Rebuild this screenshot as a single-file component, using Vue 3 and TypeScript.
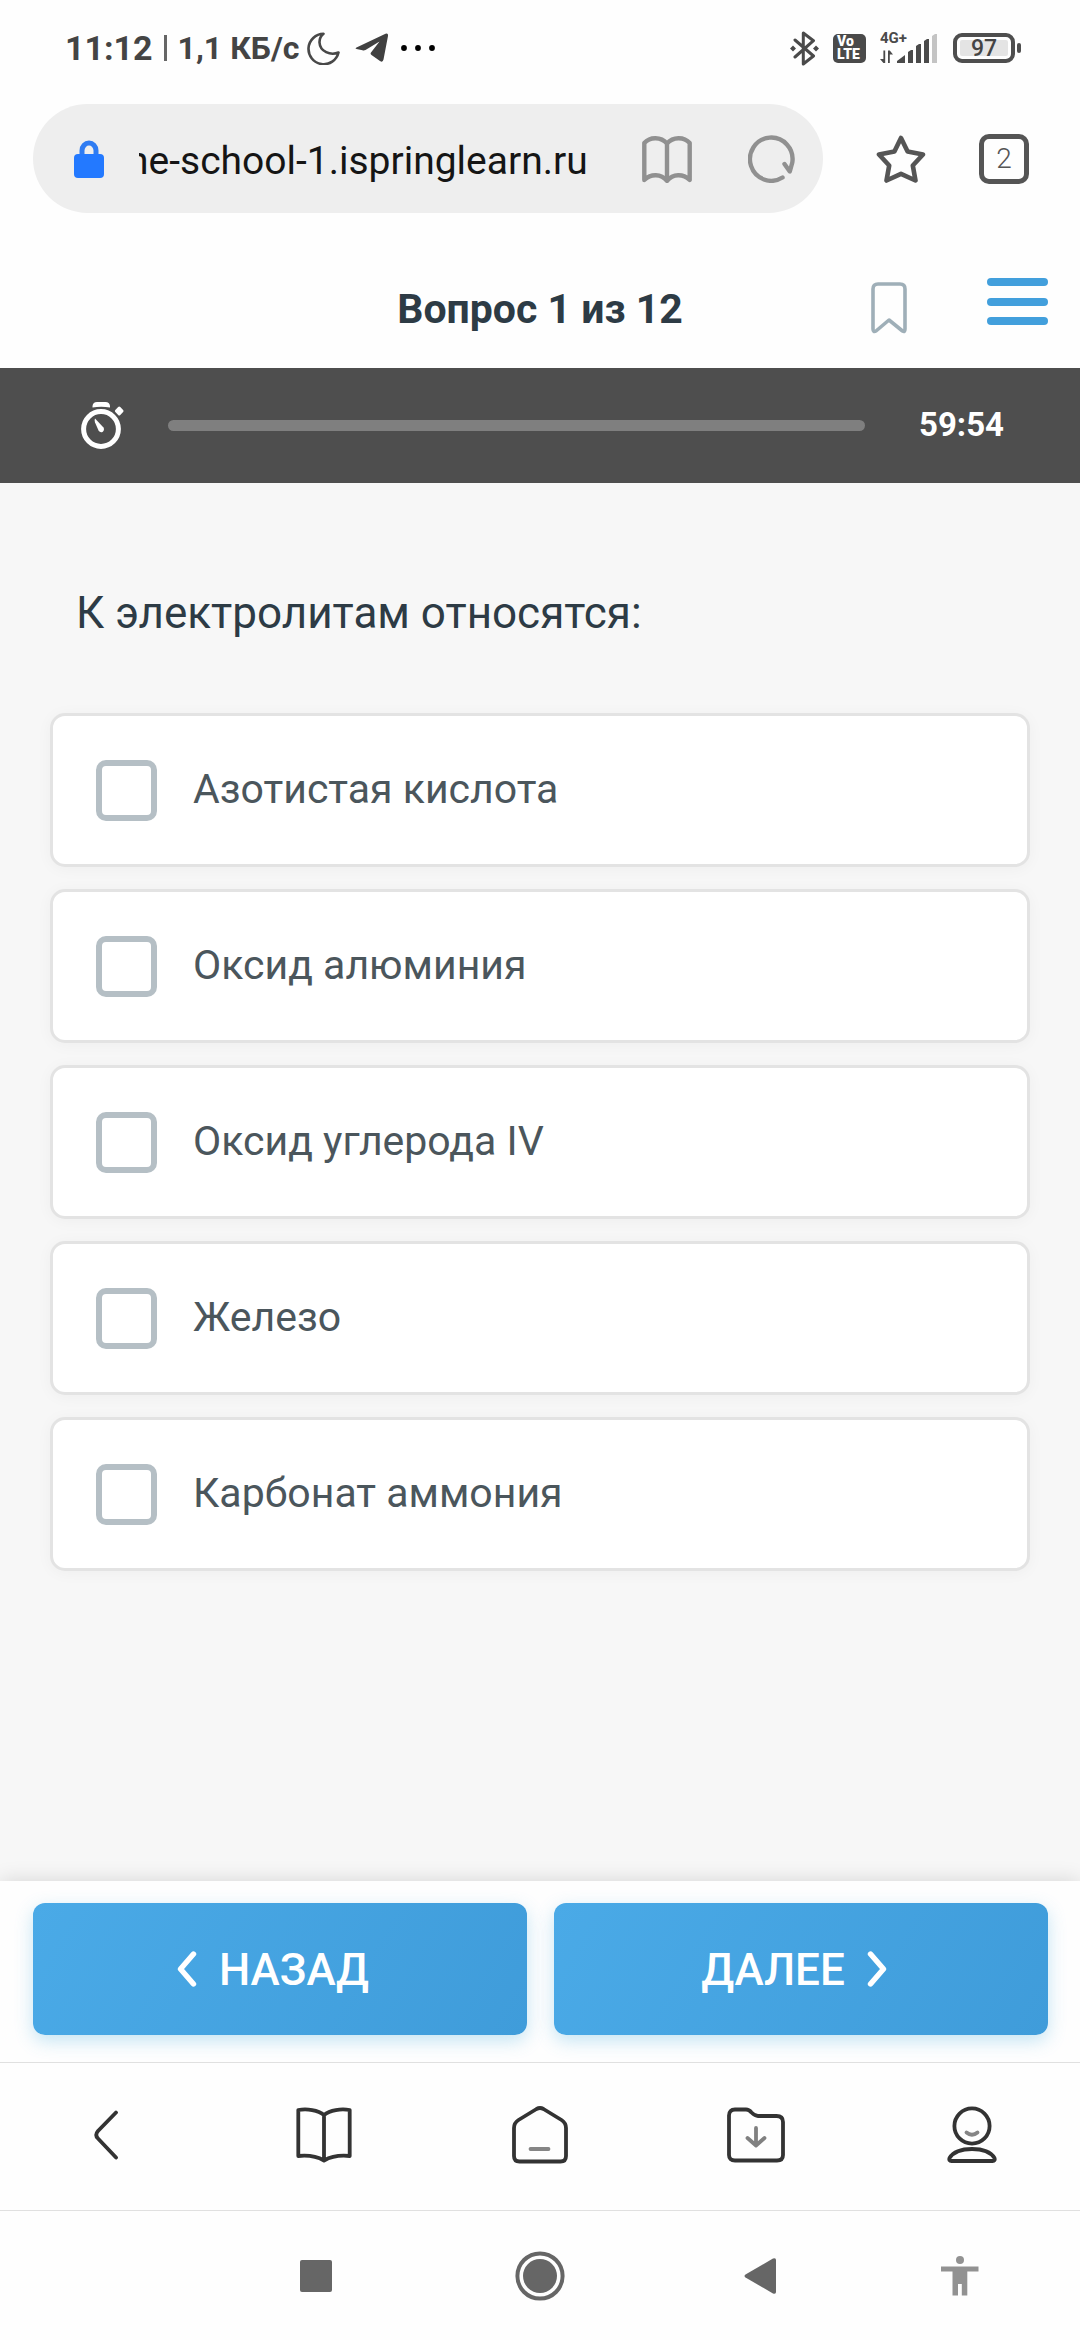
<script setup lang="ts">
import { onMounted, ref } from 'vue'

interface Answer {
  id: string
  label: string
}

const address = ref('ne-school-1.ispringlearn.ru')
const addressBox = ref<HTMLInputElement | null>(null)

const answers: Answer[] = [
  { id: 'a1', label: 'Азотистая кислота' },
  { id: 'a2', label: 'Оксид алюминия' },
  { id: 'a3', label: 'Оксид углерода IV' },
  { id: 'a4', label: 'Железо' },
  { id: 'a5', label: 'Карбонат аммония' },
]
const chosen = ref<string[]>([])

// Long addresses show their end, so the domain stays readable.
onMounted(() => {
  const box = addressBox.value
  if (box) box.scrollLeft = box.scrollWidth
})
</script>

<template>
  <div class="screen">
    <div class="status">
      <div class="status-left">
        <span class="clock">11:12</span>
        <span class="divider"></span>
        <span class="speed">1,1 КБ/с</span>
        <svg class="moon" width="33" height="33" viewBox="0 0 33 33" fill="none" stroke="#484848" stroke-width="2.6" stroke-linejoin="round">
          <path d="M16.5 1.8A15.2 15.2 0 1 0 31.5 20.5C23.5 24 13 19.5 12.5 10.5C12.4 7 13.8 4 16.5 1.8Z" />
        </svg>
        <svg class="plane" width="34" height="30" viewBox="0 0 34 30" fill="#404040">
          <path d="M1.5 14.5L30.5.7Q33.5-.3 33 3L28.5 26.5Q27.8 29.8 25 28L16.5 22Q15 20.8 16 19.5L24.5 8.5L10.5 17Q9 17.8 7.5 17.3L1.5 16Q-.5 15.4 1.5 14.5Z" />
        </svg>
        <svg width="34" height="6" viewBox="0 0 34 6" fill="#000">
          <circle cx="3" cy="3" r="2.9" /><circle cx="17" cy="3" r="2.9" /><circle cx="31" cy="3" r="2.9" />
        </svg>
      </div>
      <div class="status-right">
        <svg width="29" height="35" viewBox="0 0 29 35" fill="none" stroke="#4a4a4a" stroke-width="3" stroke-linejoin="round" stroke-linecap="round">
          <path d="M5 9L23.5 25L13.3 33V2L23.5 9.7L5 26" />
          <path d="M0 17.5L3 14.5L6 17.5L3 20.5ZM23 17.5L26 14.5L29 17.5L26 20.5Z" fill="#4a4a4a" stroke="none" />
        </svg>
        <span class="volte"><span>Vo</span><span>LTE</span></span>
        <svg class="signal" width="58" height="44" viewBox="0 -6 58 44" fill="#4a4a4a">
          <text x="0" y="11" class="net">4G+</text>
          <path d="M3.4 18.5H5.2V31H3.4L0 27H3.4ZM8 18.5H9.8L13 22.5H9.8V31H8Z" />
          <path d="M17 31V29L25 23V31ZM28 20L31 18H33V31H28ZM36 14L39 12H41V31H36ZM44 9L47 7H49V31H44Z" />
          <path d="M52 4L55 2H57V31H52Z" fill="#c4c4c4" />
        </svg>
        <span class="battery">97</span>
      </div>
    </div>

    <div class="browser">
      <div class="omnibox">
        <svg width="30" height="38" viewBox="0 0 30 38">
          <path d="M8 16V10.5A7 7.5 0 0 1 22 10.5V16" fill="none" stroke="#2f7cf2" stroke-width="5" />
          <rect y="14" width="30" height="24" rx="4" fill="#2379ff" />
        </svg>
        <input ref="addressBox" v-model="address" class="address" type="text" aria-label="Адрес" />
        <button type="button" class="icon" aria-label="Чтение">
          <svg width="50" height="48" viewBox="0 0 50 48" fill="none" stroke="#909090" stroke-width="4.4" stroke-linejoin="round">
            <path d="M25 8.5C19 1.5 8 1.5 2.3 8V45C9 38.5 19 38.5 25 46C31 38.5 41 38.5 47.7 45V8C42 1.5 31 1.5 25 8.5ZM25 8.5V45" />
          </svg>
        </button>
        <button type="button" class="icon" aria-label="Обновить">
          <svg width="48" height="48" viewBox="0 0 48 48" fill="none" stroke="#909090" stroke-width="4.4" stroke-linejoin="round" stroke-linecap="round">
            <path d="M34.5 42.5A21.3 21.6 0 1 1 44.3 27.5L41.8 36.5L36.5 29" />
          </svg>
        </button>
      </div>
      <button type="button" class="icon" aria-label="В закладки">
        <svg width="50" height="48" viewBox="0 0 50 48" fill="none" stroke="#555" stroke-width="4.6" stroke-linejoin="round">
          <path d="M25 3L31.6 16.6L47 19.5L36.8 30.5L39.5 45.5L25 38.8L10.5 45.5L13.2 30.5L3 19.5L18.4 16.6Z" />
        </svg>
      </button>
      <button type="button" class="tabs" aria-label="Вкладки">2</button>
    </div>

    <header class="head">
      <h1>Вопрос 1 из 12</h1>
      <div class="head-tools">
        <button type="button" class="icon" aria-label="Отметить вопрос">
          <svg width="36" height="52" viewBox="0 0 36 52" fill="none" stroke="#9fafb8" stroke-width="3.6" stroke-linejoin="round">
            <path d="M2 7Q2 2 7 2H29Q34 2 34 7V47Q34 50.5 31.5 49L18 38L5 49Q2 50.5 2 47Z" />
          </svg>
        </button>
        <button type="button" class="icon menu" aria-label="Меню">
          <svg width="61" height="48" viewBox="0 0 61 48" fill="#429fdc">
            <rect width="61" height="8" rx="4" /><rect y="20" width="61" height="8" rx="4" /><rect y="39" width="61" height="8" rx="4" />
          </svg>
        </button>
      </div>
    </header>

    <div class="timer">
      <svg width="44" height="47" viewBox="0 0 44 47" fill="#fff">
        <circle cx="20" cy="27" r="17.4" fill="none" stroke="#fff" stroke-width="5" />
        <path d="M11.5 5.5V4Q12 0 16 0H24.5Q28.5 0 29 4V5.5Q20 4 11.5 5.5Z" />
        <rect x="34.7" y="5.5" width="7" height="7" rx="1.5" transform="rotate(45 38.2 9)" />
        <path d="M14 16.5Q13.2 18 14 20.5L17.5 28.5Q19 31 21.5 30Q23.8 28 22.5 25.5Z" />
      </svg>
      <div class="track" role="progressbar" aria-label="Оставшееся время"></div>
      <span class="left">59:54</span>
    </div>

    <main class="body">
      <h2>К электролитам относятся:</h2>
      <ul class="answers">
        <li v-for="a in answers" :key="a.id">
          <label class="answer" :for="a.id">
            <input :id="a.id" v-model="chosen" type="checkbox" :value="a.id" />
            <span class="label">{{ a.label }}</span>
          </label>
        </li>
      </ul>
    </main>

    <div class="actions">
      <button type="button">
        <svg width="20" height="36" viewBox="0 0 20 36" fill="none" stroke="#fff" stroke-width="5.4" stroke-linecap="round" stroke-linejoin="round">
          <path d="M16.5 3L3.5 18L16.5 33" />
        </svg>
        <span class="caption">НАЗАД</span>
      </button>
      <button type="button">
        <span class="caption">ДАЛЕЕ</span>
        <svg width="20" height="36" viewBox="0 0 20 36" fill="none" stroke="#fff" stroke-width="5.4" stroke-linecap="round" stroke-linejoin="round">
          <path d="M3.5 3L16.5 18L3.5 33" />
        </svg>
      </button>
    </div>

    <nav class="toolbar">
      <button type="button" class="icon" aria-label="Назад">
        <svg width="28" height="50" viewBox="0 0 28 50" fill="none" stroke="#333" stroke-width="3.8" stroke-linecap="round">
          <path d="M22 2.5L4 21Q.5 25 4 28.5L22 47.5" />
        </svg>
      </button>
      <button type="button" class="icon" aria-label="Чтение">
        <svg width="56" height="56" viewBox="0 0 56 56" fill="none" stroke="#333" stroke-width="3.8" stroke-linejoin="round">
          <path d="M28 8C22 3 11 1.5 2.3 3V49C12 48 21 49.5 28 53.5C35 49.5 44 48 53.7 49V3C45 1.5 34 3 28 8ZM28 8V53" />
        </svg>
      </button>
      <button type="button" class="icon" aria-label="Домой">
        <svg width="56" height="58" viewBox="0 0 56 58" fill="none" stroke="#333" stroke-width="3.8" stroke-linecap="round" stroke-linejoin="round">
          <path d="M24.5 3L6.5 14Q2 17 2 22V50Q2 55.5 7.5 55.5H48.5Q54 55.5 54 50V22Q54 17 49.5 14L31.5 3Q28 1 24.5 3Z" />
          <path d="M18.5 43H36.5" stroke="#858585" />
        </svg>
      </button>
      <button type="button" class="icon" aria-label="Загрузки">
        <svg width="58" height="56" viewBox="0 0 58 56" fill="none" stroke="#333" stroke-width="3.8" stroke-linecap="round" stroke-linejoin="round">
          <path d="M8 2.5H19Q22 2.5 24.5 5.5Q28 9 31 9H49.5Q56 9 56 15V48Q56 53.5 50 53.5H8Q2 53.5 2 48V8.5Q2 2.5 8 2.5Z" />
          <path d="M29 21V38M20.5 31L29 38.5L37.5 31" stroke="#808080" />
        </svg>
      </button>
      <button type="button" class="icon" aria-label="Профиль">
        <svg width="50" height="57" viewBox="0 0 50 57" fill="none" stroke="#333" stroke-width="3.8" stroke-linecap="round" stroke-linejoin="round">
          <circle cx="25" cy="20" r="17.6" />
          <path d="M2.5 52C7 45 15 43 25 43C35 43 43 45 47.5 52Q48.5 55 45.5 55H4.5Q1.5 55 2.5 52Z" />
          <path d="M19.5 26.5Q25 31 30.5 26.5" stroke="#858585" />
        </svg>
      </button>
    </nav>

    <nav class="system">
      <button type="button" class="icon" aria-label="Недавние">
        <svg width="32" height="32" viewBox="0 0 32 32" fill="#666"><rect width="32" height="32" rx="2" /></svg>
      </button>
      <button type="button" class="icon" aria-label="Главный экран">
        <svg width="50" height="50" viewBox="0 0 50 50" fill="#666">
          <circle cx="25" cy="25" r="22.6" fill="none" stroke="#666" stroke-width="4" /><circle cx="25" cy="25" r="17" />
        </svg>
      </button>
      <button type="button" class="icon" aria-label="Назад">
        <svg width="40" height="36" viewBox="0 0 40 36" fill="#666">
          <path d="M1.5 16.5L29 .5Q32 -.5 32 2V34Q32 36.5 29 35.5L1.5 19.5Q-.5 18 1.5 16.5Z" />
        </svg>
      </button>
      <button type="button" class="icon" aria-label="Специальные возможности">
        <svg width="38" height="40" viewBox="0 0 38 40" fill="#929292">
          <circle cx="19" cy="4" r="4" />
          <path d="M0 10.5H37.5V15.5H26.3V39.5H20.8V28H17V39.5H11.5V15.5H0Z" />
        </svg>
      </button>
    </nav>
  </div>
</template>

<style>
body {
  margin: 0;
}
</style>

<style scoped>
.screen {
  display: flex;
  flex-direction: column;
  min-height: 100vh;
  background: #fefefe;
  font-family: Roboto, "Noto Sans", sans-serif;
}
button {
  border: 0;
  padding: 0;
  background: none;
  font-family: inherit;
}
svg {
  display: block;
  flex: none;
}
.icon {
  display: flex;
  align-items: center;
  justify-content: center;
}

.status {
  display: flex;
  justify-content: space-between;
  align-items: center;
  height: 96px;
  padding: 0 65px;
  color: #444;
}
.status-left,
.status-right {
  display: flex;
  align-items: center;
}
.clock {
  font-size: 34px;
  font-weight: 700;
}
.divider {
  width: 3px;
  height: 26px;
  margin: 0 11px;
  background: #666;
}
.speed {
  font-size: 32px;
  font-weight: 700;
}
.moon {
  margin-left: 8px;
}
.plane {
  margin: 0 12px 0 15px;
}
.volte {
  display: flex;
  flex-direction: column;
  justify-content: center;
  align-items: flex-start;
  box-sizing: border-box;
  width: 33px;
  height: 29px;
  margin: 0 14px;
  padding-left: 4px;
  border-radius: 5px;
  background: #4a4a4a;
  color: #fff;
  font-size: 14px;
  font-weight: 900;
  line-height: 13px;
}
.signal {
  margin-right: 15px;
}
.net {
  font-size: 15px;
  font-weight: 700;
}
.battery {
  position: relative;
  box-sizing: border-box;
  width: 62px;
  height: 30px;
  border: 4px solid #4e4e4e;
  border-radius: 9px;
  background: #e4e4e4;
  box-shadow: inset 0 0 0 3px #fefefe;
  color: #444;
  font-size: 23px;
  font-weight: 500;
  line-height: 24px;
  text-align: center;
}
.battery::after {
  content: "";
  position: absolute;
  top: 6px;
  right: -10px;
  width: 4px;
  height: 10px;
  border-radius: 2px;
  background: #4e4e4e;
}

.browser {
  display: flex;
  align-items: center;
  padding: 8px 51px 34px 33px;
}
.omnibox {
  display: flex;
  flex: 1;
  align-items: center;
  min-width: 0;
  height: 109px;
  margin-right: 53px;
  padding: 0 27px 0 41px;
  box-sizing: border-box;
  border-radius: 55px;
  background: #eee;
}
.address {
  flex: 1;
  min-width: 0;
  margin: 0 54px 0 35px;
  padding: 4px 0 0;
  border: 0;
  outline: 0;
  background: none;
  color: #151515;
  font-family: inherit;
  font-size: 39px;
  line-height: 48px;
}
.omnibox .icon + .icon {
  margin-left: 56px;
}
.tabs {
  width: 50px;
  height: 50px;
  margin-left: 53px;
  border: 5px solid #555;
  border-radius: 10px;
  color: #555;
  font-size: 28px;
  font-weight: 300;
  line-height: 40px;
}

.head {
  display: grid;
  grid-template-columns: 1fr auto 1fr;
  align-items: center;
  height: 121px;
  padding: 0 32px;
}
h1 {
  grid-column: 2;
  margin: 0;
  padding-top: 2px;
  color: #2d3b45;
  font-size: 41px;
  font-weight: 700;
  line-height: 48px;
}
.head-tools {
  display: flex;
  align-items: center;
  justify-content: flex-end;
  gap: 80px;
}
.menu {
  padding-bottom: 12px;
}

.timer {
  display: flex;
  align-items: center;
  height: 115px;
  padding: 0 76px 0 81px;
  background: #4e4e4e;
}
.track {
  flex: 1;
  height: 11px;
  margin: 0 54px 0 43px;
  border-radius: 6px;
  background: #7f7f7f;
}
.left {
  padding-bottom: 2px;
  color: #fff;
  font-size: 33px;
  font-weight: 700;
}

.body {
  flex: 1;
  padding: 102px 50px 60px;
  background: #f7f7f7;
}
h2 {
  margin: 0 26px 72px;
  color: #2d3b45;
  font-size: 44px;
  font-weight: 400;
  line-height: 56px;
}
.answers {
  display: flex;
  flex-direction: column;
  gap: 22px;
  margin: 0;
  padding: 0;
  list-style: none;
}
.answer {
  display: flex;
  align-items: center;
  gap: 36px;
  box-sizing: border-box;
  height: 154px;
  padding: 0 43px;
  border: 3px solid #e3e3e3;
  border-radius: 15px;
  background: #fff;
  box-shadow: 0 2px 16px rgba(0, 0, 0, 0.04);
  color: #4b565c;
  font-size: 41px;
}
.label {
  padding-bottom: 2px;
}
.answer input {
  appearance: none;
  flex: none;
  width: 61px;
  height: 61px;
  margin: 0;
  border: 6px solid #b5bfc5;
  border-radius: 10px;
  background: #fff;
}

.actions {
  position: relative;
  display: grid;
  grid-template-columns: 1fr 1fr;
  gap: 27px;
  padding: 22px 32px 27px 33px;
  background: #fefefe;
  box-shadow: 0 0 20px rgba(0, 0, 0, 0.14);
}
.actions button {
  display: flex;
  align-items: center;
  justify-content: center;
  gap: 22px;
  height: 132px;
  padding-right: 14px;
  border-radius: 12px;
  background: linear-gradient(120deg, #4aaae7, #3f9cda);
  box-shadow: 0 6px 18px rgba(64, 170, 220, 0.3);
  color: #fff;
  font-size: 44px;
  font-weight: 500;
}
.caption {
  padding-top: 2px;
}

.toolbar {
  position: relative;
  display: grid;
  grid-template-columns: repeat(5, 1fr);
  box-sizing: border-box;
  height: 149px;
  padding-bottom: 4px;
  border-top: 1px solid #e0e0e0;
  border-bottom: 1px solid #e0e0e0;
  background: #fefefe;
}
.system {
  display: grid;
  grid-template-columns: 4fr 4fr 4fr 3fr;
  height: 129px;
  padding: 0 36px 0 204px;
}
</style>
